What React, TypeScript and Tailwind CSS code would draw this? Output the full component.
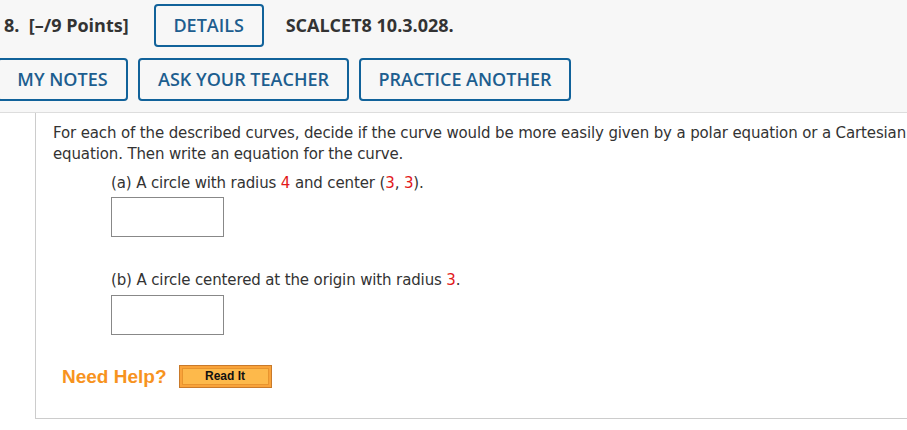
import React from 'react';

const OutlineButton: React.FC<{ label: string; className?: string }> = ({ label, className }) => (
  <button
    className={`h-[43px] border-2 border-[#11629a] rounded-[4px] bg-[#f7f7f7] text-[#1d5e8f] text-[18px] font-semibold ${className ?? ''}`}
  >
    {label}
  </button>
);

const AnswerBox: React.FC = () => (
  <div className="w-[113px] h-[40px] border border-[#888] bg-white" />
);

const Red: React.FC<{ children: React.ReactNode }> = ({ children }) => (
  <span className="text-[#e2191b]">{children}</span>
);

export default function App() {
  return (
    <div className="w-[907px] h-[430px] bg-white overflow-hidden">
      <div
        className="h-[113px] bg-[#f7f7f7] border-b border-[#dddddd] pt-[4px]"
        style={{ fontFamily: '"Open Sans", sans-serif' }}
      >
        <div className="flex items-center h-[43px]">
          <span className="pl-[4px] text-[18px] font-bold text-[#333] whitespace-pre">8.  [–/9 Points]</span>
          <OutlineButton label="DETAILS" className="ml-[25px] w-[110px]" />
          <span className="ml-[22px] text-[18px] font-bold text-[#333]">SCALCET8 10.3.028.</span>
        </div>
        <div className="flex items-center gap-[10px] mt-[11px] -ml-[3px]">
          <OutlineButton label="MY NOTES" className="w-[131px]" />
          <OutlineButton label="ASK YOUR TEACHER" className="w-[211px]" />
          <OutlineButton label="PRACTICE ANOTHER" className="w-[212px]" />
        </div>
      </div>

      <div
        className="ml-[35px] h-[306px] border-l border-b border-[#cccccc] pl-[17px] pt-[10px] text-[#333] text-[15px] leading-[21px] tracking-[-0.13px]"
        style={{ fontFamily: 'Verdana, "DejaVu Sans", sans-serif' }}
      >
        <p className="whitespace-nowrap">
          For each of the described curves, decide if the curve would be more easily given by a polar equation or a Cartesian
        </p>
        <p>equation. Then write an equation for the curve.</p>

        <div className="pl-[58px] mt-[8px]">
          <p>
            (a) A circle with radius <Red>4</Red> and center (<Red>3</Red>, <Red>3</Red>).
          </p>
          <div className="mt-[3px]">
            <AnswerBox />
          </div>
          <p className="mt-[33px]">
            (b) A circle centered at the origin with radius <Red>3</Red>.
          </p>
          <div className="mt-[4px]">
            <AnswerBox />
          </div>
        </div>

        <div className="flex items-center mt-[30px] pl-[9px]">
          <span
            className="text-[19px] font-bold text-[#f7931e] tracking-normal"
            style={{ fontFamily: '"Liberation Sans", Arial, sans-serif' }}
          >
            Need Help?
          </span>
          <button
            className="ml-[12px] w-[93px] h-[23px] border border-[#c97a2a] bg-[#f9a33a] p-[2px]"
            style={{ fontFamily: '"Liberation Sans", Arial, sans-serif' }}
          >
            <span className="flex items-center justify-center w-full h-full border border-[#e8942e] bg-[#fdb94b] text-[12px] font-bold text-[#111] tracking-normal">
              Read It
            </span>
          </button>
        </div>
      </div>
    </div>
  );
}
